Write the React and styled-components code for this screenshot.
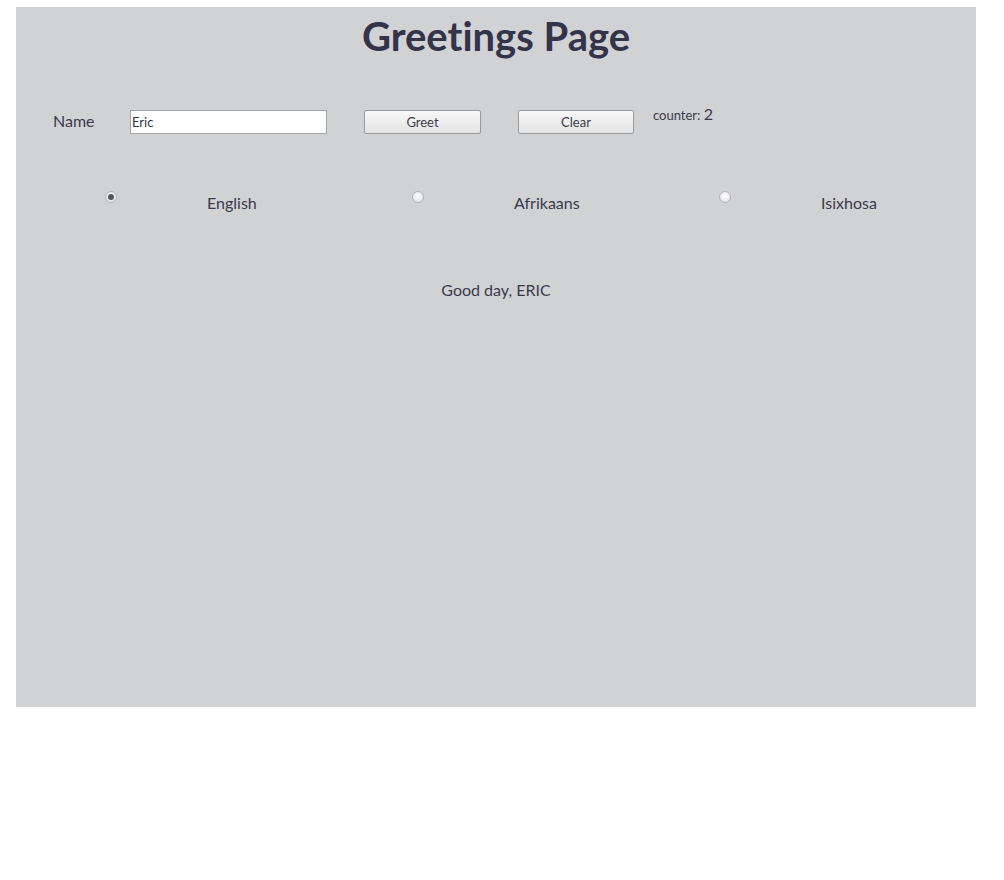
import React, { useState } from "react";
import styled, { createGlobalStyle } from "styled-components";

const Global = createGlobalStyle`
  html, body { margin: 0; padding: 0; background: #fff; }
  body {
    font-family: Lato, "Open Sans", sans-serif;
    color: #33334a;
    font-variant-ligatures: none;
  }
`;

const Page = styled.div`
  padding: 7px 0 0 16px;
`;

const Panel = styled.div`
  width: 960px;
  height: 700px;
  background: #d1d2d4;
  box-sizing: border-box;
`;

const Title = styled.h1`
  margin: 0;
  padding-top: 7px;
  text-align: center;
  font-size: 40px;
  line-height: 44px;
  font-weight: 700;
  color: #33334a;
`;

const FormRow = styled.div`
  display: flex;
  align-items: center;
  margin-top: 52px;
  padding-left: 37px;
  height: 24px;
`;

const Label = styled.label`
  width: 77px;
  flex-shrink: 0;
  margin-bottom: 4px;
  font-size: 16px;
  color: #3a3a4c;
`;

const NameInput = styled.input`
  box-sizing: border-box;
  width: 197px;
  height: 24px;
  margin: 0 37px 0 0;
  padding: 0 1px;
  border: 1px solid #a6a6a6;
  background: #fff;
  font-family: Lato, sans-serif;
  font-size: 13px;
  color: #33334a;
  outline: none;
`;

const Button = styled.button`
  box-sizing: border-box;
  flex-shrink: 0;
  width: ${(p) => p.$w}px;
  height: 24px;
  margin-right: ${(p) => p.$mr}px;
  border: 1px solid #9a9a9a;
  border-radius: 2px;
  background: linear-gradient(#f9f9f9, #e3e3e3);
  font-family: Lato, sans-serif;
  font-size: 13px;
  color: #3a3a4c;
  padding: 0;
  cursor: pointer;
`;

const Counter = styled.div`
  align-self: flex-start;
  margin-top: -6px;
  font-size: 13px;
  color: #3a3a4c;
  span { font-size: 16px; }
`;

const RadioRow = styled.div`
  display: flex;
  margin-top: 57px;
  padding-left: 89px;
`;

const Option = styled.label`
  display: flex;
  align-items: flex-start;
  flex-shrink: 0;
  width: 307px;
  font-size: 16px;
  color: #3a3a4c;
`;

const Radio = styled.input`
  appearance: none;
  box-sizing: border-box;
  flex-shrink: 0;
  width: 12px;
  height: 12px;
  margin: 0 90px 0 0;
  border-radius: 50%;
  border: 1px solid #b4b4b6;
  background: radial-gradient(circle at 50% 40%, #ffffff, #dcdcdc);
  position: relative;
  &:checked::after {
    content: "";
    position: absolute;
    left: 2px;
    top: 2px;
    width: 6px;
    height: 6px;
    border-radius: 50%;
    background: #555559;
  }
`;

const OptionText = styled.span`
  margin-top: 2px;
`;

const Greeting = styled.div`
  margin-top: 68px;
  text-align: center;
  font-size: 16px;
  color: #3a3a4c;
`;

export default function App() {
  const [name, setName] = useState("Eric");
  const [lang, setLang] = useState("English");
  const langs = ["English", "Afrikaans", "Isixhosa"];
  return (
    <Page>
      <Global />
      <Panel>
        <Title>Greetings Page</Title>
        <FormRow>
          <Label>Name</Label>
          <NameInput value={name} onChange={(e) => setName(e.target.value)} />
          <Button $w={117} $mr={37}>Greet</Button>
          <Button $w={116} $mr={19}>Clear</Button>
          <Counter>
            counter: <span>2</span>
          </Counter>
        </FormRow>
        <RadioRow>
          {langs.map((l) => (
            <Option key={l}>
              <Radio
                type="radio"
                name="lang"
                checked={lang === l}
                onChange={() => setLang(l)}
              />
              <OptionText>{l}</OptionText>
            </Option>
          ))}
        </RadioRow>
        <Greeting>Good day, ERIC</Greeting>
      </Panel>
    </Page>
  );
}
